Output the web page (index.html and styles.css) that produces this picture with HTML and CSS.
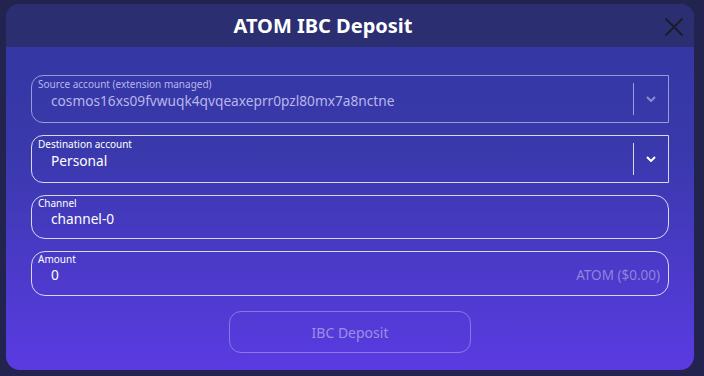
FILE: index.html
```html
<!DOCTYPE html>
<html lang="en">
<head>
<meta charset="utf-8">
<title>ATOM IBC Deposit</title>
<link rel="stylesheet" href="styles.css">
</head>
<body>
<div class="modal">
  <div class="modal-header">
    <h1 class="modal-title">ATOM IBC Deposit</h1>
    <button class="close-btn" aria-label="Close">
      <svg width="20" height="20" viewBox="0 0 20 20"><path d="M1.5 1.5 L18.5 18.5 M18.5 1.5 L1.5 18.5" stroke="#1c1c30" stroke-width="2.2" fill="none"/></svg>
    </button>
  </div>
  <div class="modal-body">
    <div class="field select disabled">
      <div class="field-main">
        <div class="field-label">Source account (extension managed)</div>
        <div class="field-value">cosmos16xs09fvwuqk4qvqeaxeprr0pzl80mx7a8nctne</div>
      </div>
      <div class="sep"></div>
      <div class="chev"><svg width="10" height="6" viewBox="0 0 10 6"><path d="M1 1 L5 5 L9 1" stroke="currentColor" stroke-width="2" fill="none"/></svg></div>
    </div>
    <div class="field select">
      <div class="field-main">
        <div class="field-label">Destination account</div>
        <div class="field-value">Personal</div>
      </div>
      <div class="sep"></div>
      <div class="chev"><svg width="10" height="6" viewBox="0 0 10 6"><path d="M1 1 L5 5 L9 1" stroke="currentColor" stroke-width="2" fill="none"/></svg></div>
    </div>
    <div class="field input channel">
      <div class="field-label">Channel</div>
      <div class="field-value">channel-0</div>
    </div>
    <div class="field input amount">
      <div class="field-label">Amount</div>
      <div class="field-row">
        <span class="field-value">0</span>
        <span class="suffix">ATOM ($0.00)</span>
      </div>
    </div>
    <div class="actions">
      <button class="deposit-btn" disabled>IBC Deposit</button>
    </div>
  </div>
</div>
</body>
</html>
```
FILE: styles.css
```css
* { box-sizing: border-box; }
html, body { height: 100%; }
body {
  margin: 0;
  padding: 4px 10px 6px 6px;
  background: #22244f;
  font-family: "Noto Sans", "Open Sans", sans-serif;
  color: #fff;
}
.modal {
  height: 366px;
  border-radius: 14px;
  overflow: hidden;
  background: linear-gradient(180deg, #3236a0 0%, #3a39ac 40%, #5a3be2 100%);
  display: flex;
  flex-direction: column;
}
.modal-header {
  height: 43px;
  background: #2b2f72;
  display: flex;
  align-items: center;
  flex-shrink: 0;
}
.modal-title {
  flex: 1;
  margin: 0;
  text-align: center;
  font-size: 20px;
  font-weight: 700;
  color: #fff;
}
.close-btn {
  width: 54px;
  height: 20px;
  padding: 0 10px 0 0;
  border: 0;
  background: none;
  display: flex;
  justify-content: flex-end;
  margin-top: 2px;
}
.close-btn svg { display: block; }
.modal-body {
  flex: 1;
  padding: 28px 25px 17px;
  display: flex;
  flex-direction: column;
  gap: 12px;
}
.field {
  border: 1px solid #d8d8f4;
  color: #fff;
}
.field.select {
  height: 48px;
  border-radius: 12px 0 0 12px;
  display: flex;
  align-items: center;
}
.field.select.disabled {
  border-color: #9c9ad6;
  color: #b8b6ea;
}
.field-main {
  flex: 1;
  align-self: stretch;
  padding: 2px 0 0 6px;
}
.field-label {
  font-size: 10px;
  line-height: 12px;
  color: inherit;
}
.field-value {
  font-size: 13.7px;
  line-height: 19px;
  padding-left: 13px;
  margin-top: 1px;
}
.sep {
  width: 1px;
  height: 32px;
  background: currentColor;
  opacity: 0.8;
}
.chev {
  width: 34px;
  display: flex;
  justify-content: center;
  align-items: center;
}
.chev svg { display: block; }
.disabled .chev { color: #8e8cc8; }
.field.input {
  border-radius: 14px;
  padding: 1px 8px 0 6px;
}
.field.input .field-value { line-height: 18px; }
.field-row .field-value { margin-top: 0; }
.field.channel { height: 44px; }
.field.amount { height: 45px; }
.field-row {
  display: flex;
  justify-content: space-between;
  align-items: center;
  margin-top: 1px;
}
.suffix {
  font-size: 13.5px;
  line-height: 18px;
  color: #8e84da;
}
.actions {
  margin-top: 3px;
  display: flex;
  justify-content: center;
}
.deposit-btn {
  width: 242px;
  height: 42px;
  border-radius: 12px;
  border: 1px solid rgba(200, 190, 255, 0.45);
  background: transparent;
  color: #9c90e6;
  font-family: "Noto Sans", "Open Sans", sans-serif;
  font-size: 14px;
}
```
